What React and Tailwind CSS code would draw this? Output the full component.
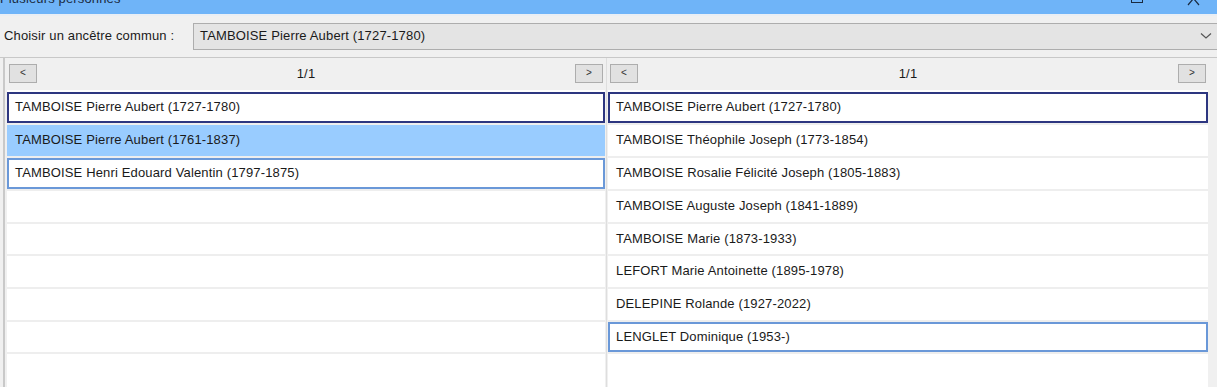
import React from "react";

const left = [
  { t: "TAMBOISE Pierre Aubert (1727-1780)", s: "dark" },
  { t: "TAMBOISE Pierre Aubert (1761-1837)", s: "hl" },
  { t: "TAMBOISE Henri Edouard Valentin (1797-1875)", s: "blue" },
  { t: "" },
  { t: "" },
  { t: "" },
  { t: "" },
  { t: "" },
];

const right = [
  { t: "TAMBOISE Pierre Aubert (1727-1780)", s: "dark" },
  { t: "TAMBOISE Théophile Joseph (1773-1854)" },
  { t: "TAMBOISE Rosalie Félicité Joseph (1805-1883)" },
  { t: "TAMBOISE Auguste Joseph (1841-1889)" },
  { t: "TAMBOISE Marie (1873-1933)" },
  { t: "LEFORT Marie Antoinette (1895-1978)" },
  { t: "DELEPINE Rolande (1927-2022)" },
  { t: "LENGLET Dominique (1953-)", s: "blue" },
];

function Row({ t, s, short }) {
  const cls =
    s === "dark"
      ? "border-[#2d3680] bg-white"
      : s === "blue"
      ? "border-[#6a98d8] bg-white"
      : s === "hl"
      ? "border-[#99ccff] bg-[#99ccff]"
      : "border-transparent bg-white";
  return (
    <div className="border-b-2 border-[#eeeeee]">
      <div
        className={`${short ? "h-[30px]" : "h-[31px]"} border-2 ${cls} flex items-center pl-[6px] pb-[1px] whitespace-nowrap`}
      >
        {t}
      </div>
    </div>
  );
}

function NavBtn({ children }) {
  return (
    <div className="w-[28px] h-[19px] bg-[#e1e1e1] border border-[#adadad] flex items-center justify-center text-[10px] text-[#333] leading-none pb-[1px]">
      {children}
    </div>
  );
}

function Panel({ rows, extra }) {
  return (
    <div className={`w-[602px] h-full flex flex-col ${extra}`}>
      <div className="h-[32px] flex items-center px-[2px] pb-[2px] shrink-0 bg-[#f0f0f0]">
        <NavBtn>&lt;</NavBtn>
        <div className="flex-1 text-center pt-[1px]">1/1</div>
        <NavBtn>&gt;</NavBtn>
      </div>
      <div className="flex-1 bg-white pt-[2px]">
        {rows.map((r, i) => (
          <Row key={i} short={i === 4 || i === 7} {...r} />
        ))}
      </div>
    </div>
  );
}

export default function App() {
  return (
    <div
      className="w-[1217px] h-[387px] bg-[#f0f0f0] overflow-hidden text-[13px] tracking-[0.15px] text-[#1a1a1a] flex flex-col"
      style={{ fontFamily: '"Liberation Sans", Arial, sans-serif' }}
    >
      <div className="relative h-[14px] bg-[#6fb4f8] shrink-0 overflow-hidden">
        <div className="absolute left-[0px] top-[-11px] text-[13px] leading-[20px] text-[#1a2a40]">Plusieurs personnes</div>
        <svg className="absolute left-[1130px] top-[-9px]" width="14" height="14" viewBox="0 0 14 14">
          <rect x="1.5" y="1.5" width="11" height="10" fill="none" stroke="#1a2a40" strokeWidth="1" />
        </svg>
        <svg className="absolute left-[1186px] top-[-8px]" width="16" height="14" viewBox="0 0 16 14">
          <path d="M2 0 L13 13 M13 0 L2 13" stroke="#1a2a40" strokeWidth="1.2" />
        </svg>
      </div>
      <div className="h-[2px] bg-[#e9eef4] shrink-0" />
      <div className="flex items-center h-[37px] pt-[3px] shrink-0">
        <div className="w-[193px] pl-[4px] pb-[1px]">Choisir un ancêtre commun :</div>
        <div className="flex-1 -mr-[4px] h-[27px] bg-[#e4e4e4] border border-[#adadad] flex items-center pl-[6px] pr-[8px]">
          <span className="flex-1">TAMBOISE Pierre Aubert (1727-1780)</span>
          <svg width="12" height="8" viewBox="0 0 12 8">
            <path d="M1 1.5 L6 6 L11 1.5" fill="none" stroke="#555" strokeWidth="1.2" />
          </svg>
        </div>
      </div>
      <div className="mt-[4px] border-t border-[#c8c8c8] h-[330px] shrink-0 flex pl-[3px] pr-[4px] gap-[1px]">
        <Panel rows={left} extra="border-l-2 border-[#c9c9c9] pl-[2px]" />
        <Panel rows={right} extra="border-l border-[#dedede] pl-[1px]" />
      </div>
    </div>
  );
}
